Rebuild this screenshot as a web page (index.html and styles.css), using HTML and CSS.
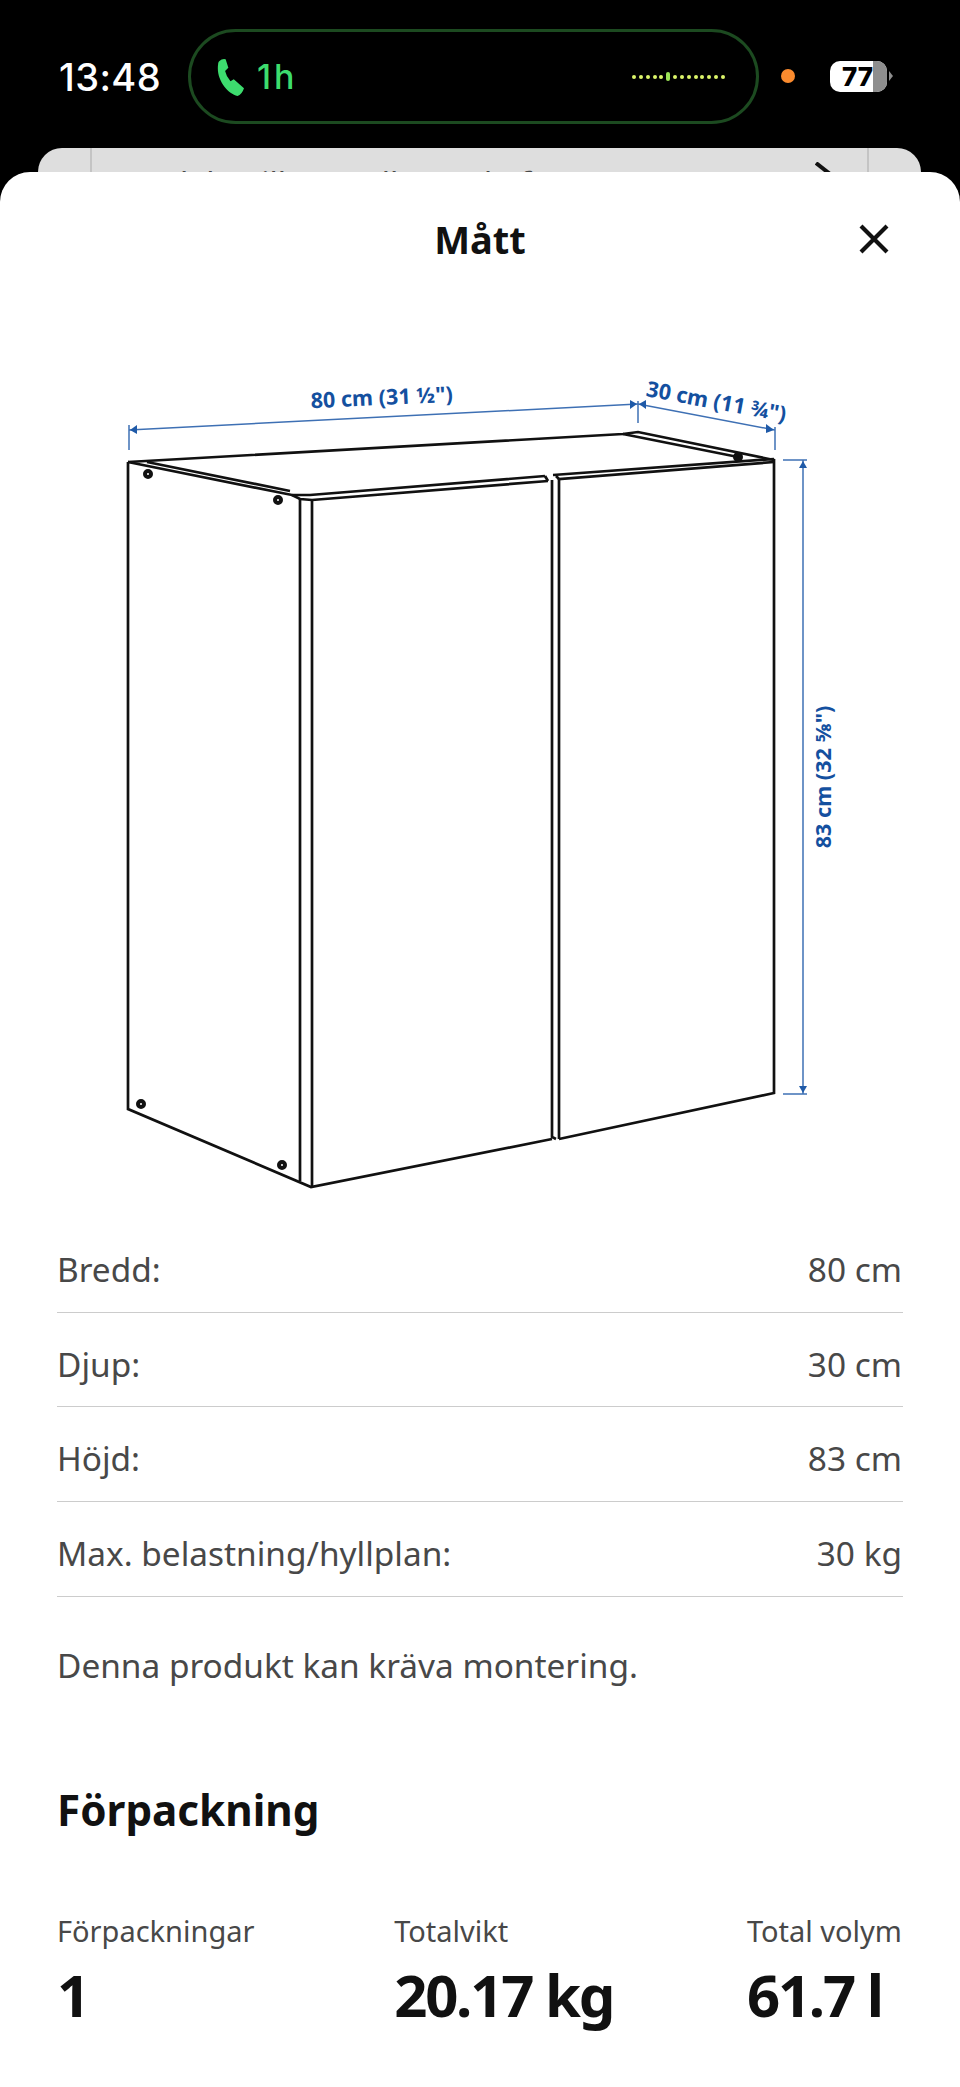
FILE: index.html
```html
<!DOCTYPE html>
<html lang="sv">
<head>
<meta charset="utf-8">
<title>Mått</title>
<link rel="stylesheet" href="styles.css">
</head>
<body>
<header class="status">
  <div class="time">13:48</div>
  <div class="call">
    <svg class="phone" viewBox="0 0 25 35" width="27" height="38"><path class="phone-shape" d="M2 3Q5 0 8 1L10.5 9 7.5 12Q8.5 17 12.5 21.5L15.5 19.5 25 28Q23 34 19 35C10 33-1 20 1 6 1 4 2 3 2 3Z"/></svg>
    <span class="call-time">1h</span>
    <div class="wave">
      <i></i><i></i><i></i><i></i><i></i><i class="peak"></i><i></i><i></i><i></i><i></i><i></i><i></i><i></i><i></i>
    </div>
  </div>
  <span class="mic-dot"></span>
  <div class="battery"><div class="battery-body"><span class="battery-level">77</span><span class="battery-rest"></span></div><span class="battery-nub"></span></div>
</header>

<div class="behind">
  <div class="behind-side"></div>
  <div class="behind-main">
    <span class="behind-text">leka till mer alla med ofta</span>
    <svg class="behind-chevron" viewBox="0 0 16 24" width="16" height="24"><path d="M1 1 15 12"/></svg>
  </div>
  <div class="behind-side behind-side-end"></div>
</div>

<main class="sheet">
  <div class="sheet-head">
    <h1 class="sheet-title">Mått</h1>
    <button class="close" aria-label="Stäng">
      <svg viewBox="0 0 30 30" width="30" height="30"><path d="M2 2 28 28M28 2 2 28"/></svg>
    </button>
  </div>

  <svg class="drawing" viewBox="0 360 960 840" width="960" height="840">
    <g class="ink">
      <path d="M128 462V1109L311 1187 552 1139"/>
      <path d="M128 462 623 434 638 432 774 460V1093L559 1139"/>
      <path d="M128 462 292 495 310 495 545 476"/>
      <path d="M147 462 290 491"/>
      <path d="M623 434 738 457"/>
      <path d="M300 498V1181"/>
      <path d="M292 495 300 499 312 500 548 481"/>
      <path d="M312 500V1187"/>
      <path d="M545 476 548 481"/>
      <path d="M552 480V1137L556 1139"/>
      <path d="M559 478V1139"/>
      <path d="M553 475 774 459"/>
      <path d="M556 476 559 479 774 462"/>
    </g>
    <g class="screw">
      <circle cx="148" cy="474" r="3"/>
      <circle cx="278" cy="500" r="3"/>
      <circle cx="141" cy="1104" r="3"/>
      <circle cx="282" cy="1165" r="3"/>
      <circle class="screw-solid" cx="738" cy="457" r="3"/>
    </g>
    <g class="dim">
      <path d="M129 425V450"/>
      <path d="M129 430 638 404"/>
      <path d="M638 401V423"/>
      <path d="M638 404 775 430"/>
      <path d="M775 427V450"/>
      <path d="M783 460H807"/>
      <path d="M783 1094H807"/>
      <path d="M803 460V1094"/>
    </g>
    <g class="dim-arrow">
      <path d="M130 430 137 425 137 434Z"/>
      <path d="M637 404 630 400 630 409Z"/>
      <path d="M639 404 646 400 646 409Z"/>
      <path d="M774 430 766 424 766 433Z"/>
      <path d="M803 461 799 468H807Z"/>
      <path d="M803 1093 799 1086H807Z"/>
    </g>
    <text class="dim-label" transform="translate(382 405) rotate(-2.6)" text-anchor="middle">80 cm (31 ½")</text>
    <text class="dim-label" transform="translate(715 409) rotate(10.5)" text-anchor="middle">30 cm (11 ¾")</text>
    <text class="dim-label" transform="translate(831 777) rotate(-90)" text-anchor="middle">83 cm (32 ⅝")</text>
  </svg>

  <section class="specs">
    <div class="spec-row"><span>Bredd:</span><span>80 cm</span></div>
    <div class="spec-row"><span>Djup:</span><span>30 cm</span></div>
    <div class="spec-row"><span>Höjd:</span><span>83 cm</span></div>
    <div class="spec-row"><span>Max. belastning/hyllplan:</span><span>30 kg</span></div>
    <p class="note">Denna produkt kan kräva montering.</p>
  </section>

  <section class="packaging">
    <h2 class="packaging-title">Förpackning</h2>
    <div class="facts">
      <div class="fact"><div class="fact-label">Förpackningar</div><div class="fact-value">1</div></div>
      <div class="fact fact-middle"><div class="fact-label">Totalvikt</div><div class="fact-value">20.17 kg</div></div>
      <div class="fact"><div class="fact-label">Total volym</div><div class="fact-value">61.7 l</div></div>
    </div>
  </section>
</main>
</body>
</html>
```

FILE: styles.css
```css
* { box-sizing: border-box; }

html, body {
  margin: 0;
  padding: 0;
  background: #000;
}

body {
  height: 2087px;
  overflow: hidden;
  font-family: "Noto Sans", "Liberation Sans", sans-serif;
}

/* Status bar */
.status {
  display: flex;
  align-items: center;
  height: 148px;
  padding: 6px 0 0 59px;
  color: #fff;
}

.time {
  width: 100px;
  font: 500 38px/1 Inter, "Liberation Sans", sans-serif;
  letter-spacing: 0.4px;
  white-space: nowrap;
  margin-right: 29px;
}

.call {
  display: flex;
  align-items: center;
  width: 571px;
  height: 95px;
  margin-top: -1px;
  padding: 0 31px 0 26px;
  border: 3px solid #1c4a20;
  border-radius: 48px;
}

.phone { flex: none; }
.phone-shape { fill: #3ddc6e; }

.call-time {
  margin-left: 13px;
  font: 500 34px/1 Inter, "Liberation Sans", sans-serif;
  letter-spacing: 3px;
  color: #3ddc6e;
}

.wave {
  display: flex;
  align-items: center;
  gap: 2.85px;
  margin-left: auto;
}

.wave i {
  display: block;
  width: 4px;
  height: 4px;
  border-radius: 50%;
  background: #dcf56a;
}

.wave .peak {
  height: 9px;
  border-radius: 2px;
  background: #9ce356;
}

.mic-dot {
  flex: none;
  width: 14px;
  height: 14px;
  margin: -2px 0 0 22px;
  border-radius: 50%;
  background: #fb8b2e;
}

.battery {
  display: flex;
  align-items: center;
  gap: 2px;
  margin: -2px 0 0 35px;
}

.battery-body {
  display: flex;
  width: 57px;
  height: 31px;
  overflow: hidden;
  border-radius: 10px;
  background: #fff;
}

.battery-level {
  flex: 1;
  padding-left: 12px;
  font: 800 26px/31px Inter, "Liberation Sans", sans-serif;
  color: #000;
}

.battery-rest {
  width: 14px;
  background: #8e8e8e;
}

.battery-nub {
  width: 0;
  height: 0;
  border-top: 5px solid transparent;
  border-bottom: 5px solid transparent;
  border-left: 4px solid #8e8e8e;
}

/* Page peeking out behind the sheet */
.behind {
  display: flex;
  height: 24px;
  margin: 0 39px 0 38px;
  overflow: hidden;
  border-radius: 24px 24px 0 0;
  background: #dedede;
}

.behind-side {
  flex: none;
  width: 54px;
  border-right: 2px solid #c4c4c4;
}

.behind-side-end {
  border-right: 0;
  border-left: 2px solid #c4c4c4;
}

.behind-main {
  display: flex;
  flex: 1;
  justify-content: space-between;
  padding: 0 36px 0 88px;
}

.behind-text {
  font-size: 32px;
  line-height: 44px;
  padding-top: 14px;
  color: #484848;
  white-space: nowrap;
}

.behind-chevron {
  flex: none;
  margin-top: 14px;
}

.behind-chevron path {
  fill: none;
  stroke: #111;
  stroke-width: 4;
}

/* Sheet */
.sheet {
  height: 1915px;
  overflow: hidden;
  border-radius: 30px 30px 0 0;
  background: #fff;
}

.sheet-head {
  display: grid;
  grid-template-columns: 1fr auto 1fr;
  align-items: center;
  align-content: start;
  height: 188px;
  padding: 42px 71px 0;
}

.sheet-title {
  grid-column: 2;
  margin: 0;
  font-size: 38px;
  font-weight: 700;
  line-height: 50px;
  color: #111;
}

.close {
  grid-column: 3;
  justify-self: end;
  width: 30px;
  height: 30px;
  padding: 0;
  border: 0;
  background: none;
}

.close svg { display: block; }

.close path {
  fill: none;
  stroke: #111;
  stroke-width: 4.2;
}

/* Drawing */
.drawing {
  display: block;
}

.ink path {
  fill: none;
  stroke: #111;
  stroke-width: 2.7;
  stroke-linejoin: miter;
}

.screw circle {
  fill: #fff;
  stroke: #111;
  stroke-width: 4;
}

.screw .screw-solid {
  fill: #111;
}

.dim path {
  fill: none;
  stroke: #3e70b4;
  stroke-width: 1.5;
}

.dim-arrow path { fill: #1f5aa8; }

.dim-label {
  font-family: "Noto Sans", sans-serif;
  font-size: 21.6px;
  font-weight: 700;
  fill: #14509f;
}

/* Spec rows */
.specs {
  margin-top: 18px;
  padding: 0 57px;
}

.spec-row {
  display: flex;
  justify-content: space-between;
  height: 94.67px;
  padding: 29px 1px 0 0;
  border-bottom: 1.5px solid #cccccc;
  font-size: 33.4px;
  line-height: 44px;
  color: #484848;
}

.note {
  margin: 46px 0 0;
  font-size: 33.4px;
  line-height: 44px;
  color: #484848;
}

/* Packaging */
.packaging {
  padding: 0 58px 0 57px;
}

.packaging-title {
  margin: 95px 0 0;
  font-size: 42.2px;
  font-weight: 700;
  line-height: 56px;
  color: #111;
}

.facts {
  display: flex;
  justify-content: space-between;
  margin-top: 74px;
}

.fact-middle {
  margin-left: 6px;
}

.fact-label {
  font-size: 29px;
  line-height: 38px;
  color: #484848;
}

.fact-value {
  margin-top: 10px;
  font-size: 58px;
  font-weight: 700;
  line-height: 70px;
  letter-spacing: -2.2px;
  color: #111;
}
```
